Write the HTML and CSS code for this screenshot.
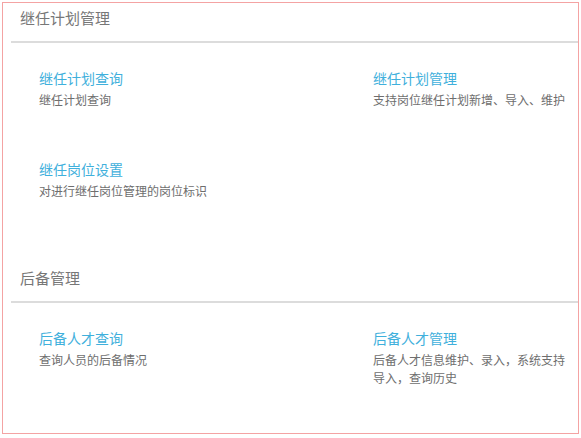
FILE: index.html
```html
<!DOCTYPE html>
<html lang="zh-CN">
  <head>
    <meta charset="UTF-8" />
    <meta name="viewport" content="width=device-width, initial-scale=1.0" />
    <title>继任计划管理</title>
    <link rel="stylesheet" href="styles.css">
  </head>
  <body>
    <div class="panel">
      <section class="section">
        <h3 class="section-head">继任计划管理</h3>
        <div class="items">
          <div class="item">
            <a class="item-title" href="#">继任计划查询</a>
            <p class="item-desc">继任计划查询</p>
          </div>
          <div class="item">
            <a class="item-title" href="#">继任计划管理</a>
            <p class="item-desc">支持岗位继任计划新增、导入、维护</p>
          </div>
          <div class="item">
            <a class="item-title" href="#">继任岗位设置</a>
            <p class="item-desc">对进行继任岗位管理的岗位标识</p>
          </div>
        </div>
      </section>

      <section class="section">
        <h3 class="section-head">后备管理</h3>
        <div class="items">
          <div class="item">
            <a class="item-title" href="#">后备人才查询</a>
            <p class="item-desc">查询人员的后备情况</p>
          </div>
          <div class="item">
            <a class="item-title" href="#">后备人才管理</a>
            <p class="item-desc">后备人才信息维护、录入，系统支持导入，查询历史</p>
          </div>
        </div>
      </section>
    </div>
  </body>
</html>
```

FILE: styles.css
```css
:root {
  --frame: #f4a3a3;
  --rule: #dcdcdc;
  --link: #3fb0dc;
  --head: #777777;
  --text: #6e6e6e;
}

* {
  margin: 0;
  padding: 0;
  box-sizing: border-box;
  font-family: "Noto Sans CJK SC", "Noto Sans", sans-serif;
}

body {
  background: #ffffff;
}

.panel {
  width: 577px;
  height: 432px;
  margin: 2px;
  border: 1px solid var(--frame);
  overflow: hidden;
}

.section + .section {
  margin-top: 63px;
}

.section-head {
  margin-left: 8px;
  padding: 4px 0 12px 9px;
  border-bottom: 2px solid var(--rule);
  font-size: 15px;
  line-height: 22px;
  font-weight: normal;
  color: var(--head);
}

.items {
  display: grid;
  grid-template-columns: 334px 1fr;
  row-gap: 49px;
  margin-left: 8px;
  padding-top: 24px;
}

.item {
  padding: 0 10px 0 28px;
}

.item-title {
  display: block;
  font-size: 14px;
  line-height: 22px;
  color: var(--link);
  text-decoration: none;
}

.item-desc {
  margin-top: 2px;
  font-size: 12px;
  line-height: 18px;
  color: var(--text);
}
```
